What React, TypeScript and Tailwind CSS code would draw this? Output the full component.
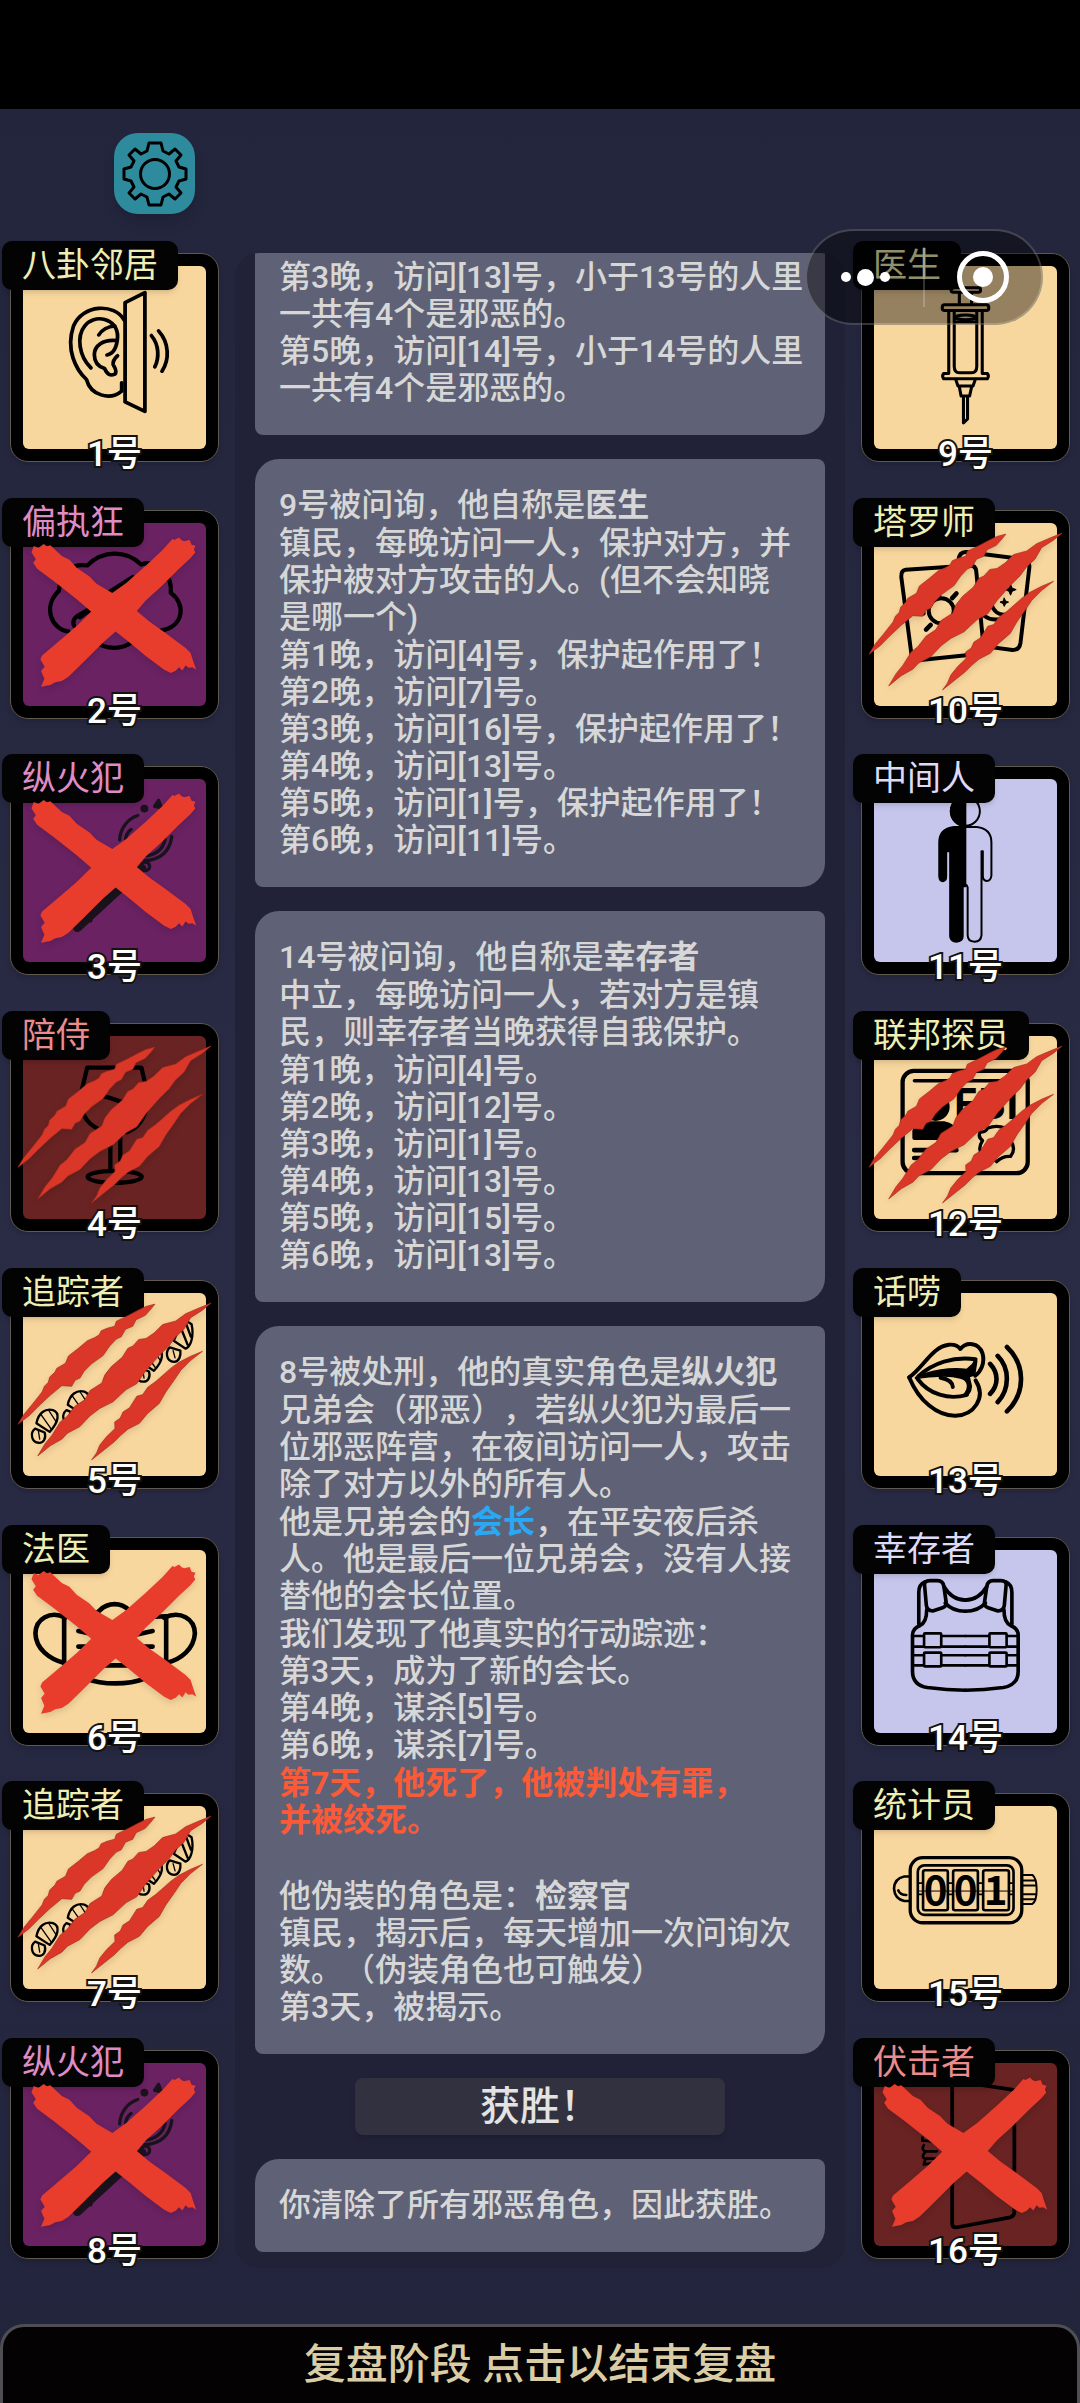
import React, { useState } from 'react';
import clsx from 'clsx';

type Side = 'town' | 'evil' | 'syndicate' | 'neutral';
type Mark = 'executed' | 'killed';

interface Player {
  seat: number;
  role: string;
  side: Side;
  icon: React.ReactNode;
  mark?: Mark;
}

const nameColors: Record<Side, string> = {
  town: 'text-[#eeeeb4]',
  evil: 'text-[#e08cc4]',
  syndicate: 'text-[#ea8c8c]',
  neutral: 'text-[#dedaf8]',
};

const tileColors: Record<Side, string> = {
  town: 'bg-[#f8d79e]',
  evil: 'bg-[#6a2262]',
  syndicate: 'bg-[#692323]',
  neutral: 'bg-[#c6c5ec]',
};

interface ArtProps {
  viewBox: string;
  strokeWidth: number;
  stretch?: boolean;
  children: React.ReactNode;
}

const Art: React.FC<ArtProps> = ({ viewBox, strokeWidth, stretch, children }) => (
  <svg
    className="absolute inset-0 h-full w-full"
    viewBox={viewBox}
    preserveAspectRatio={stretch ? 'none' : 'xMidYMid meet'}
    fill="none"
    stroke="#000"
    strokeWidth={strokeWidth}
    strokeLinecap="round"
    strokeLinejoin="round"
    aria-hidden="true"
  >
    {children}
  </svg>
);

const NeighborIcon = () => (
  <Art viewBox="31 460 606 627" strokeWidth={11} stretch>
    <path d="M365 607 L423 577 V937 L365 908 Z" />
    <path d="M362 660 C335 608 240 612 214 678 C190 750 222 812 252 840 C264 888 320 905 355 875 V850" />
    <path d="M265 805 C230 770 222 710 247 678 C272 640 345 652 343 712 C341 745 332 762 312 766" />
    <path d="M288 705 C300 685 315 680 335 678 M340 722 C300 718 275 738 275 765 C275 790 290 802 305 807 C313 826 322 830 335 824 C344 815 332 800 330 795 C328 782 336 775 343 768" />
    <path d="M442 707 C465 735 465 775 452 802 M463 693 C495 730 495 780 473 815" />
  </Art>
);

const ParanoidIcon = () => (
  <Art viewBox="31 90 627 627" strokeWidth={13}>
    <path d="M205 455 C155 450 125 380 176 332 C180 275 215 248 262 255 C310 208 380 208 425 252 C475 235 520 285 515 338 C560 370 558 440 483 453" />
    <path d="M285 485 C320 512 370 510 400 485" />
    <path d="M222 438 C212 410 240 405 272 385 M330 335 L400 290 M240 412 L290 375" />
  </Art>
);

const ArsonistIcon = () => (
  <Art viewBox="31 861 627 627" strokeWidth={10}>
    <g stroke="#1a131d">
      <path d="M360 1082 C362 1045 385 1018 415 1008 M378 1080 C380 1062 388 1055 395 1050" />
      <path d="M518 1072 C512 1112 488 1142 435 1145 M498 1080 C492 1108 470 1128 440 1130" />
      <circle cx="435" cy="987" r="7" fill="#1a131d" />
      <path d="M478 962 L486 984 L466 980 Z" fill="#1a131d" />
      <circle cx="438" cy="1162" r="13" />
      <path d="M428 1168 L232 1348" strokeWidth={26} />
      <path d="M262 1312 l10 14" strokeWidth={12} />
    </g>
  </Art>
);

const EscortIcon = () => (
  <Art viewBox="31 70 627 627" strokeWidth={13}>
    <path d="M262 202 H426 L440 262 C452 325 432 380 382 398 M262 202 L246 268 C236 335 255 370 300 390" />
    <path d="M308 290 C340 290 348 306 380 308" />
    <path d="M332 420 V515 M362 410 V505" />
    <ellipse cx="345" cy="533" rx="82" ry="18" />
  </Art>
);

const Shoeprint: React.FC<{ x: number; y: number }> = ({ x, y }) => (
  <g transform={`translate(${x} ${y})`}>
    <path d="M108 1272 C114 1240 135 1226 158 1232 C180 1240 176 1268 148 1298 Z" />
    <path d="M122 1246 L152 1288 M146 1234 L168 1268" strokeWidth={4} />
    <path d="M104 1288 C88 1300 92 1330 115 1331 C130 1332 138 1318 133 1300 Z" />
    <path d="M114 1296 L118 1320" strokeWidth={4} />
  </g>
);

const TrackerIcon = () => (
  <Art viewBox="31 841 627 627" strokeWidth={7}>
    <Shoeprint x={0} y={0} />
    <Shoeprint x={95} y={-56} />
    <Shoeprint x={205} y={-125} />
    <Shoeprint x={316} y={-185} />
    <path d="M565 964 L578 972 C586 1010 575 1040 560 1046 L524 1022 L540 985 M546 984 L566 1034 M562 972 L576 1010" />
    <path d="M512 1042 C498 1055 500 1084 525 1086 C540 1085 546 1068 544 1052 Z" />
    <path d="M522 1052 L528 1074" strokeWidth={4} />
  </Art>
);

const ForensicIcon = () => (
  <Art viewBox="31 51 627 627" strokeWidth={14}>
    <path d="M196 292 C150 270 106 295 105 340 C106 388 150 418 188 428" />
    <path d="M494 292 C545 270 587 295 588 340 C585 388 545 418 506 428" />
    <path d="M192 288 V430 M501 288 V430" />
    <path d="M192 288 C245 292 280 290 300 270 C325 245 365 245 388 270 C410 290 450 292 501 288" />
    <path d="M192 430 C245 512 450 512 501 430" />
    <path d="M235 333 L290 345 M460 333 L405 345 M235 380 H285 M460 380 H405 M275 437 H420" />
  </Art>
);

const DoctorIcon = () => (
  <Art viewBox="931 160 606 627" strokeWidth={9} stretch>
    <rect x="1192" y="262" width="86" height="14" rx="6" />
    <path d="M1216 278 V312 M1252 278 V312" />
    <rect x="1166" y="314" width="136" height="17" rx="7" />
    <path d="M1185 334 V520 M1283 334 V520" />
    <path d="M1201 334 V500 Q1201 520 1216 520 H1252 Q1267 520 1267 500 V334" />
    <ellipse cx="1234" cy="352" rx="30" ry="7" />
    <path d="M1204 366 H1264" />
    <path d="M1185 522 H1170 Q1164 530 1170 538 H1298 Q1304 530 1298 522 H1283" />
    <path d="M1206 542 L1212 560 H1256 L1262 542 M1216 562 L1221 590 H1246 L1252 562" />
    <path d="M1228 594 V672 L1240 660 V594" />
  </Art>
);

const TarotIcon = () => (
  <Art viewBox="122 90 627 627" strokeWidth={12}>
    <path d="M254 268 L448 255 Q466 254 468 272 L490 500 Q492 520 474 523 L292 542 Q274 543 272 526 L241 290 Q240 270 254 268 Z" />
    <path d="M414 240 Q416 213 438 214 L610 236 Q630 240 629 260 L602 490 Q598 512 578 511 L495 500" />
    <circle cx="362" cy="392" r="38" />
    <path d="M395 354 L408 340 M330 435 L316 449 M300 400 H308 M355 342 V346" strokeWidth={14} />
    <path d="M488 300 C498 298 505 300 510 304 M493 408 C520 428 560 418 576 394 M515 376 C525 400 545 408 566 402" />
    <path d="M572 312 l5 12 12 4 -12 5 -5 12 -5 -12 -12 -5 12 -4 Z M553 354 l4 9 9 3 -9 4 -4 9 -4 -9 -9 -4 9 -3 Z" fill="#000" strokeWidth={3} />
  </Art>
);

const MiddlemanIcon = () => (
  <Art viewBox="122 861 627 627" strokeWidth={6}>
    <circle cx="435" cy="995" r="44" />
    <path d="M435 951 A44 44 0 0 0 435 1039 Z" fill="#000" />
    <path d="M435 1043 H400 Q356 1048 356 1090 V1192 Q357 1207 367 1207 Q377 1206 377 1193 V1116 H389 V1374 Q391 1390 408 1390 Q427 1389 427 1374 V1222 H435 Z" fill="#000" />
    <path d="M435 1043 H470 Q514 1048 514 1090 V1190 Q512 1206 500 1206 Q488 1206 488 1190 V1116 H484 V1370 Q482 1390 463 1390 Q442 1390 442 1370 V1226 Q440 1218 435 1218" />
  </Art>
);

const FederalIcon = () => (
  <Art viewBox="122 71 627 627" strokeWidth={13}>
    <rect x="245" y="213" width="379" height="310" rx="34" />
    <path d="M281 243 H600" strokeWidth={11} />
    <circle cx="345" cy="322" r="36" fill="#000" />
    <path d="M281 416 V395 Q290 376 320 372 H370 Q396 376 400 395 V416 Z" fill="#000" />
    <path d="M280 453 H408 M280 477 H345" strokeWidth={14} />
    <text
      x="498"
      y="360"
      fontSize="126"
      fontWeight="700"
      fontFamily="'Liberation Sans Narrow', 'Noto Sans CJK SC', sans-serif"
      textAnchor="middle"
      fill="#000"
      stroke="none"
    >
      FBI
    </text>
    <path d="M480 398 Q495 400 503 386 Q530 376 556 386 Q563 400 578 398 Q586 412 572 424 Q590 450 572 472 Q548 470 530 488 Q512 470 488 472 Q470 450 487 424 Q472 412 480 398 Z" strokeWidth={10} />
    <path d="M530 412 V450 M508 430 H552 M512 452 L530 436 L548 452" strokeWidth={8} />
  </Art>
);

const TalkerIcon = () => (
  <Art viewBox="122 841 627 627" strokeWidth={12}>
    <path d="M265 1133 C310 1100 335 1040 385 1034 C405 1032 415 1040 420 1047 C438 1025 475 1026 487 1060 C495 1090 482 1115 465 1128" />
    <path d="M265 1133 C295 1205 350 1250 405 1249 C460 1248 500 1195 466 1142" />
    <path d="M292 1130 C335 1090 400 1068 466 1078 L458 1112" />
    <path d="M285 1134 C330 1112 390 1104 440 1110 L468 1085 L462 1125 L445 1130 L452 1160 Q450 1185 430 1188 C455 1160 440 1138 420 1134 C380 1122 330 1130 285 1134 Z" fill="#000" strokeWidth={7} />
    <path d="M290 1137 C325 1185 385 1202 440 1186 M360 1134 C382 1138 396 1148 397 1162" />
    <path d="M510 1092 C536 1120 536 1155 510 1183 M533 1068 C570 1105 570 1168 533 1208 M561 1041 C618 1095 618 1180 561 1236" strokeWidth={14} />
  </Art>
);

const VestHalf = () => (
  <>
    <path d="M312 200 Q308 180 328 180 H350 Q368 180 370 198 L377 246 Q378 258 366 262 L336 272 Q320 272 317 256 Z" />
    <path d="M312 184 Q294 192 294 215 V312 M318 268 Q318 305 298 316 Q275 325 275 345 V455 Q275 496 320 504 Q380 512 435 512" />
    <path d="M370 198 C388 228 410 239 435 239 M374 248 C390 266 412 273 435 273" />
    <rect x="310" y="340" width="52" height="42" rx="3" strokeWidth={8} />
    <rect x="310" y="398" width="52" height="42" rx="3" strokeWidth={8} />
    <path d="M280 348 H306 M280 380 H306 M280 406 H306 M280 437 H306 M366 348 H435 M366 380 H435 M366 406 H435 M366 437 H435" strokeWidth={8} />
  </>
);

const SurvivorIcon = () => (
  <Art viewBox="122 51 627 627" strokeWidth={11}>
    <VestHalf />
    <g transform="translate(870 0) scale(-1 1)">
      <VestHalf />
    </g>
  </Art>
);

const CounterIcon = () => (
  <Art viewBox="122 820 627 627" strokeWidth={8}>
    <path d="M265 1070 H250 Q220 1076 219 1107 Q221 1138 250 1144 H265 M232 1112 Q238 1126 256 1126" />
    <path d="M608 1065 H638 Q651 1075 651 1110 Q651 1145 638 1153 H608 M608 1082 H645 M608 1097 H648 M608 1124 H648 M608 1139 H645" strokeWidth={6} />
    <rect x="268" y="1013" width="338" height="197" rx="38" strokeWidth={10} />
    <rect x="291" y="1036" width="290" height="150" rx="20" />
    <rect x="307" y="1051" width="75" height="121" rx="6" />
    <rect x="398" y="1051" width="75" height="121" rx="6" />
    <rect x="489" y="1051" width="78" height="121" rx="6" />
    <g
      fontSize="122"
      fontWeight="700"
      fontFamily="'Liberation Sans Narrow', 'Noto Sans CJK SC', sans-serif"
      textAnchor="middle"
      fill="#000"
      stroke="none"
    >
      <text x="345" y="1155">0</text>
      <text x="436" y="1155">0</text>
      <text x="527" y="1155">1</text>
    </g>
    <path d="M292 1114 H580" strokeWidth={3} />
    <path d="M384 1090 H396 M384 1124 H396 M475 1090 H487 M475 1124 H487 M294 1090 H305 M294 1124 H305 M569 1090 H578 M569 1124 H578" strokeWidth={5} />
  </Art>
);

const AmbusherIcon = () => (
  <Art viewBox="931 60 606 627" strokeWidth={11} stretch>
    <path d="M1195 150 V585 Q1197 596 1210 594 L1365 564 Q1377 560 1377 548 V178 M1260 160 L1370 177" />
    <path d="M1108 322 V332 Q1140 330 1150 345 M1112 345 Q1104 358 1116 364 H1150 M1116 366 Q1104 380 1114 386 H1145 M1116 390 L1112 404 L1135 400" strokeWidth={8} />
  </Art>
);

const CrossMark = () => (
  <svg className="absolute inset-0 h-full w-full drop-shadow-md" viewBox="31 90 627 627" fill="#e83c2c" aria-hidden="true">
    <path d="M93 215 L100 196 L114 202 L130 190 L140 197 L150 194 L185 226 L208 238 L230 262 L268 288 L290 310 L338 338 L380 308 L440 255 L490 208 L520 175 L526 178 L540 170 L547 178 L555 182 L572 178 L578 192 L590 195 L585 206 L589 216 L575 232 L540 265 L490 315 L440 360 L412 393 L450 425 L500 460 L560 505 L575 520 L583 545 L592 571 L580 563 L568 565 L560 557 L550 573 L540 563 L530 574 L515 581 L495 571 L440 530 L390 488 L348 455 L310 488 L250 548 L205 592 L185 605 L165 609 L150 617 L122 622 L132 598 L122 575 L133 562 L120 540 L125 528 L170 490 L230 438 L274 395 L230 357 L160 302 L110 265 L98 247 L106 236 Z" />
  </svg>
);

const ClawMark = () => (
  <svg
    className="absolute inset-0 h-full w-full drop-shadow-md"
    viewBox="31 841 627 627"
    fill="#da3728"
    stroke="#a52c1f"
    strokeWidth="2"
    strokeLinejoin="round"
    aria-hidden="true"
  >
    <path d="M467 911 L440 918 L415 930 L385 946 L350 963 L345 978 L322 984 L304 992 L298 1004 L285 1012 L262 1022 L235 1045 L205 1068 L196 1090 L170 1105 L164 1117 L148 1132 L144 1148 L132 1160 L125 1177 L95 1215 L70 1245 L52 1275 L85 1250 L115 1220 L150 1187 L185 1158 L215 1160 L225 1142 L240 1135 L252 1115 L275 1092 L310 1067 L330 1038 L350 1017 L365 1010 L378 987 L400 978 L410 958 L438 945 L455 926 Z" />
    <path d="M637 908 L600 923 L560 940 L530 962 L490 973 L465 998 L440 1015 L418 1018 L400 1038 L385 1045 L368 1072 L335 1100 L315 1126 L306 1150 L270 1173 L255 1200 L225 1220 L200 1252 L180 1268 L155 1308 L134 1334 L112 1371 L150 1340 L185 1320 L202 1302 L240 1282 L270 1250 L300 1227 L340 1207 L380 1170 L412 1152 L440 1112 L480 1067 L510 1037 L530 1010 L555 987 L575 952 L610 930 Z" />
    <path d="M611 1054 L575 1069 L540 1087 L515 1105 L495 1123 L470 1145 L445 1163 L430 1185 L412 1190 L390 1225 L370 1238 L362 1256 L345 1268 L346 1288 L320 1313 L300 1338 L290 1362 L275 1383 L310 1355 L345 1327 L362 1310 L385 1290 L420 1272 L445 1242 L480 1212 L500 1177 L525 1142 L545 1112 L575 1082 Z" />
  </svg>
);

const leftPlayers: Player[] = [
  { seat: 1, role: '八卦邻居', side: 'town', icon: <NeighborIcon /> },
  { seat: 2, role: '偏执狂', side: 'evil', icon: <ParanoidIcon />, mark: 'executed' },
  { seat: 3, role: '纵火犯', side: 'evil', icon: <ArsonistIcon />, mark: 'executed' },
  { seat: 4, role: '陪侍', side: 'syndicate', icon: <EscortIcon />, mark: 'killed' },
  { seat: 5, role: '追踪者', side: 'town', icon: <TrackerIcon />, mark: 'killed' },
  { seat: 6, role: '法医', side: 'town', icon: <ForensicIcon />, mark: 'executed' },
  { seat: 7, role: '追踪者', side: 'town', icon: <TrackerIcon />, mark: 'killed' },
  { seat: 8, role: '纵火犯', side: 'evil', icon: <ArsonistIcon />, mark: 'executed' },
];

const rightPlayers: Player[] = [
  { seat: 9, role: '医生', side: 'town', icon: <DoctorIcon /> },
  { seat: 10, role: '塔罗师', side: 'town', icon: <TarotIcon />, mark: 'killed' },
  { seat: 11, role: '中间人', side: 'neutral', icon: <MiddlemanIcon /> },
  { seat: 12, role: '联邦探员', side: 'town', icon: <FederalIcon />, mark: 'killed' },
  { seat: 13, role: '话唠', side: 'town', icon: <TalkerIcon /> },
  { seat: 14, role: '幸存者', side: 'neutral', icon: <SurvivorIcon /> },
  { seat: 15, role: '统计员', side: 'town', icon: <CounterIcon /> },
  { seat: 16, role: '伏击者', side: 'syndicate', icon: <AmbusherIcon />, mark: 'executed' },
];

const PlayerCard: React.FC<{ player: Player }> = ({ player }) => (
  <button type="button" className="relative block size-[209px] rounded-[18px] border border-[#5f594f] bg-black p-3 shadow-md">
    <span className={clsx('block h-full w-full rounded-md', tileColors[player.side])} />
    {player.icon}
    <span
      className={clsx(
        'absolute -left-[9px] -top-[13px] rounded-[10px] bg-[#030303] px-5 text-[34px] leading-[49px] whitespace-nowrap shadow-md',
        nameColors[player.side],
      )}
    >
      {player.role}
    </span>
    {player.mark === 'executed' && <CrossMark />}
    {player.mark === 'killed' && <ClawMark />}
    <span className="absolute inset-x-0 -bottom-[14px] text-center text-[35px] leading-10 font-medium text-white [-webkit-text-stroke:4px_#15130f] [paint-order:stroke_fill]">
      {player.seat}号
    </span>
  </button>
);

const PlayerColumn: React.FC<{ players: Player[] }> = ({ players }) => (
  <div className="flex shrink-0 flex-col justify-between gap-8 pb-[9px]">
    {players.map((player) => (
      <PlayerCard key={player.seat} player={player} />
    ))}
  </div>
);

const Bubble: React.FC<{ children: React.ReactNode }> = ({ children }) => (
  <div className="flex shrink-0 flex-col gap-px rounded-tl-3xl rounded-tr-lg rounded-br-3xl rounded-bl-lg bg-[#5f6276] px-6 py-7 text-[32px] leading-[37px] font-medium whitespace-pre text-[#d6d7d6]">
    {children}
  </div>
);

const App = () => {
  const [reviewing, setReviewing] = useState(true);

  return (
    <div className="flex h-screen flex-col overflow-hidden bg-black font-['Roboto','Noto_Sans_CJK_SC',sans-serif] [text-spacing-trim:space-all]">
      <div className="h-[109px] shrink-0" />

      <div className="relative flex min-h-0 flex-1 flex-col bg-linear-to-b from-[#22253b] via-[#2a2b45] to-[#22243c]">
        <header className="flex shrink-0 pt-6 pb-[39px] pl-[114px]">
          <button
            type="button"
            aria-label="设置"
            className="flex size-[81px] items-center justify-center rounded-3xl bg-[#2e8b9d] shadow-lg"
          >
            <svg className="size-[66px]" viewBox="0 0 66 66" fill="none" stroke="#000" strokeWidth="3" strokeLinejoin="round" aria-hidden="true">
              <path d="M27 2 H39 L41 10 L47 13 L53 8 L59 14 L54 20 L57 26 L64 28 V38 L57 40 L54 46 L59 52 L53 58 L47 53 L41 56 L39 64 H27 L25 56 L19 53 L13 58 L7 52 L12 46 L9 40 L2 38 V28 L9 26 L12 20 L7 14 L13 8 L19 13 L25 10 Z" />
              <circle cx="33" cy="33" r="14.5" />
            </svg>
          </button>
        </header>

        <main className="flex min-h-0 flex-1 gap-4 px-[10px]">
          <PlayerColumn players={leftPlayers} />

          <section className="flex min-w-0 flex-1 flex-col justify-end gap-6 overflow-hidden rounded-3xl bg-[#212238] px-5 pb-4">
            <Bubble>
              <p>{'第3晚，访问[13]号，小于13号的人里\n一共有4个是邪恶的。\n第5晚，访问[14]号，小于14号的人里\n一共有4个是邪恶的。'}</p>
            </Bubble>

            <Bubble>
              <p>9号被问询，他自称是<b>医生</b></p>
              <p>{'镇民，每晚访问一人，保护对方，并\n保护被对方攻击的人。(但不会知晓\n是哪一个)'}</p>
              <p>{'第1晚，访问[4]号，保护起作用了！\n第2晚，访问[7]号。\n第3晚，访问[16]号，保护起作用了！\n第4晚，访问[13]号。\n第5晚，访问[1]号，保护起作用了！\n第6晚，访问[11]号。'}</p>
            </Bubble>

            <Bubble>
              <p>14号被问询，他自称是<b>幸存者</b></p>
              <p>{'中立，每晚访问一人，若对方是镇\n民，则幸存者当晚获得自我保护。'}</p>
              <p>{'第1晚，访问[4]号。\n第2晚，访问[12]号。\n第3晚，访问[1]号。\n第4晚，访问[13]号。\n第5晚，访问[15]号。\n第6晚，访问[13]号。'}</p>
            </Bubble>

            <Bubble>
              <p>8号被处刑，他的真实角色是<b>纵火犯</b></p>
              <p>{'兄弟会（邪恶），若纵火犯为最后一\n位邪恶阵营，在夜间访问一人，攻击\n除了对方以外的所有人。'}</p>
              <div>
                <p>他是兄弟会的<b className="text-[#29a9f5]">会长</b>，在平安夜后杀</p>
                <p>{'人。他是最后一位兄弟会，没有人接\n替他的会长位置。'}</p>
              </div>
              <p>{'我们发现了他真实的行动踪迹：\n第3天，成为了新的会长。\n第4晚，谋杀[5]号。\n第6晚，谋杀[7]号。'}</p>
              <p className="font-bold text-[#fa5a38]">{'第7天，他死了，他被判处有罪，\n并被绞死。'}</p>
              <br />
              <div>
                <p>他伪装的角色是：<b>检察官</b></p>
                <p>{'镇民，揭示后，每天增加一次问询次\n数。（伪装角色也可触发）\n第3天，被揭示。'}</p>
              </div>
            </Bubble>

            <h2 className="w-[370px] shrink-0 self-center rounded-lg bg-[#32313f] text-center text-[40px] leading-[57px] font-medium text-[#e2e3e2] shadow-md">
              获胜！
            </h2>

            <Bubble>
              <p>你清除了所有邪恶角色，因此获胜。</p>
            </Bubble>
          </section>

          <PlayerColumn players={rightPlayers} />
        </main>

        <footer className="mt-14 shrink-0">
          <button
            type="button"
            onClick={() => setReviewing(!reviewing)}
            className="block w-full rounded-t-3xl border-x-3 border-t-3 border-[#4f4e52] bg-[#040203] text-center text-[42px] leading-[76px] font-medium text-[#dacda6]"
          >
            复盘阶段 点击以结束复盘
          </button>
        </footer>

        {/* mini program capsule, floats above the board */}
        <div className="absolute top-[120px] right-[37px] flex h-24 w-[238px] items-center rounded-full border-2 border-white/20 bg-black/40">
          <button type="button" aria-label="更多" className="flex h-full flex-1 items-center justify-center gap-[6px]">
            <span className="size-[10px] rounded-full bg-white" />
            <span className="size-[17px] rounded-full bg-white" />
            <span className="size-[10px] rounded-full bg-white" />
          </button>
          <span className="h-[60px] w-[2px] bg-white/20" />
          <button type="button" aria-label="关闭" className="flex h-full flex-1 items-center justify-center">
            <span className="flex size-[52px] items-center justify-center rounded-full border-[5px] border-white">
              <span className="size-5 rounded-full bg-white" />
            </span>
          </button>
        </div>
      </div>
    </div>
  );
};

export default App;
